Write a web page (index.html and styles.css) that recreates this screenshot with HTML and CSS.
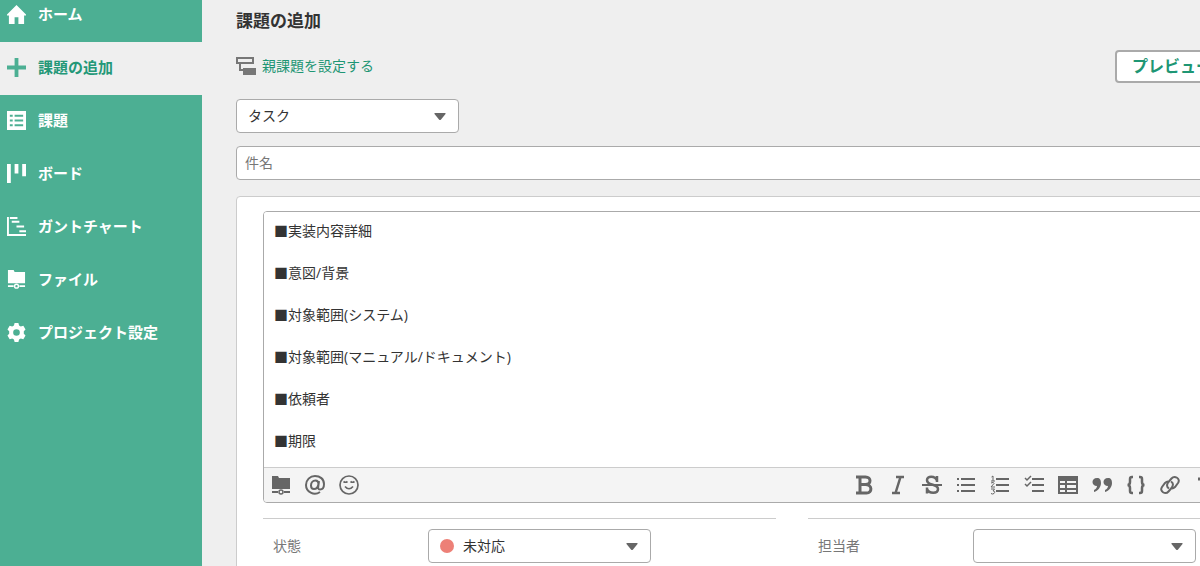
FILE: index.html
```html
<!DOCTYPE html>
<html lang="ja">
<head>
<meta charset="utf-8">
<meta name="viewport" content="width=device-width, initial-scale=1">
<title>課題の追加</title>
<link rel="stylesheet" href="styles.css">
</head>
<body>
<div class="app">
  <nav class="sidebar" aria-label="プロジェクト">
    <ul class="nav">
      <li><a class="nav-link" href="#"><svg class="icon" viewBox="0 0 20 20"><path d="M10 0 0 10v1h2v9h6v-7h4v7h6v-9h2v-1z"/></svg>ホーム</a></li>
      <li><a class="nav-link active" href="#" aria-current="page"><svg class="icon" viewBox="0 0 20 20"><path d="M8 0h4v8h8v4h-8v8H8v-8H0V8h8z"/></svg>課題の追加</a></li>
      <li><a class="nav-link" href="#"><svg class="icon" viewBox="0 0 20 20"><path fill-rule="evenodd" d="M0 0h20v20H0zM3 4v2h3V4zm5 0v2h9V4zM3 9v2h3V9zm5 0v2h9V9zm-5 5v2h3v-2zm5 0v2h9v-2z"/></svg>課題</a></li>
      <li><a class="nav-link" href="#"><svg class="icon" viewBox="0 0 20 20"><path d="M0 0h4v20H0zM8 0h4v10H8zM16 0h4v13h-4z"/></svg>ボード</a></li>
      <li><a class="nav-link" href="#"><svg class="icon" viewBox="0 0 20 20"><path d="M0 0h2v18h18v2H0zM3 0h8v2H3zM5 4h8v2H5zM10 9h8v2h-8zM13 14h7v2h-7z"/></svg>ガントチャート</a></li>
      <li><a class="nav-link" href="#"><svg class="icon" viewBox="0 0 20 20"><path d="M1 0h6l1 2h11v12H1zM1 16h6v2H1zM13 16h6v2h-6z"/><circle class="ring" cx="10" cy="17" r="2"/></svg>ファイル</a></li>
      <li><a class="nav-link" href="#"><svg class="icon" viewBox="0 0 20 20"><path fill-rule="evenodd" d="M8 0h4l.7 2.700 1.800 1L17.200 3l2.300 3.800L17.700 8.800v2.400l1.800 2L17.200 17l-2.700-.7-1.800 1L12 20H8l-.7-2.700-1.800-1L2.800 17 .5 13.200l1.800-2V8.800L.5 6.800 2.800 3l2.700.7 1.800-1zM10 6.500a3.500 3.500 0 1 0 0 7 3.500 3.500 0 0 0 0-7z"/></svg>プロジェクト設定</a></li>
    </ul>
  </nav>
  <main class="main">
    <form class="form">
      <h1 class="title">課題の追加</h1>
      <div class="actions">
        <a class="parent-link" href="#"><svg class="icon" viewBox="0 0 20 20"><path fill-rule="evenodd" d="M0 1h18v7H5v5h2v-1h13v7H7v-4H3V8H0zM2 3v3h14V3z"/></svg>親課題を設定する</a>
        <button class="preview" type="button">プレビュー</button>
      </div>
      <div class="picker">
        <select class="select" aria-label="種別"><option>タスク</option></select>
        <svg class="arrow" viewBox="0 0 12 8"><path d="M1 0h10q1 0 .5 1L7 6.500q-1 1-2 0L.5 1Q0 0 1 0z"/></svg>
      </div>
      <input class="subject" type="text" placeholder="件名" aria-label="件名">
      <section class="card">
        <div class="editor">
          <textarea class="body-text" rows="11" aria-label="詳細">■実装内容詳細

■意図/背景

■対象範囲(システム)

■対象範囲(マニュアル/ドキュメント)

■依頼者

■期限</textarea>
          <div class="toolbar">
            <button class="tool" type="button" aria-label="ファイル"><svg class="icon" viewBox="0 0 20 20"><path d="M1 1h6l1 2h11v11H1zM1 16h6v2H1zM13 16h6v2h-6z"/><circle class="ring" cx="10" cy="17" r="2"/></svg></button>
            <button class="tool" type="button" aria-label="メンション"><svg class="icon line" viewBox="0 0 20 20"><path d="M15 17c-6 4-14 0-14-7 0-5 4-9 9-9s9 3 9 8c0 4-2 5.500-4 5.500S13 13 13.300 11L14 6M13.500 9c0-2-1-3.500-3-3.500-3 0-4.500 2.500-4.500 5s1 3.500 3 3.500 4-2 4.500-5"/></svg></button>
            <button class="tool" type="button" aria-label="絵文字"><svg class="icon face" viewBox="0 0 20 20"><circle cx="10" cy="10" r="9"/><path d="M4.500 6.500q2 1.500 4 0M11.500 6.500q2 1.500 4 0M6 11.500q4 4.500 8 0"/></svg></button>
            <span class="spacer"></span>
            <button class="tool" type="button" aria-label="太字"><svg class="icon strong" viewBox="0 0 20 20"><path d="M2 2h9.500c6 0 6 7.500 0 7.500H6M6 2v16M2 18h10.500c6 0 6-8.500-1-8.500"/></svg></button>
            <button class="tool" type="button" aria-label="斜体"><svg class="icon italic" viewBox="0 0 20 20"><path d="M8 2h8M4 18h8M12.500 2 7.500 18"/></svg></button>
            <button class="tool" type="button" aria-label="取り消し線"><svg class="icon strike" viewBox="0 0 20 20"><path d="M15 7V1M15 5.500c-2-5-10-5-10-.5 0 3 3 4 5 4.500s6 1.500 6 4.500c0 5-9 5-11 0M5 12.500v6"/><path class="bar" d="M0 10h20"/></svg></button>
            <button class="tool" type="button" aria-label="箇条書き"><svg class="icon" viewBox="0 0 20 20"><path d="M5 3h14v2H5zM5 9h14v2H5zM5 15h14v2H5zM1 3h2v2H1zM1 9h2v2H1zM1 15h2v2H1z"/></svg></button>
            <button class="tool" type="button" aria-label="番号付きリスト"><svg class="icon" viewBox="0 0 20 20"><path d="M6 3h13v2H6zM6 9h13v2H6zM6 15h13v2H6z"/><path class="thin" d="M1.500 2 3 1v5M1 6h4M1 8q3-1.500 3 .5L1 12h4M1 14h3.500L3 16q3 0 1 2.500-1.500 1-3 0"/></svg></button>
            <button class="tool" type="button" aria-label="チェックリスト"><svg class="icon" viewBox="0 0 20 20"><path d="M8 3h12v2H8zM8 9h12v2H8zM8 15h12v2H8z"/><path class="check" d="m1 3 2 2 4-4M1 9l2 2 4-4"/></svg></button>
            <button class="tool" type="button" aria-label="表"><svg class="icon" viewBox="0 0 20 20"><path fill-rule="evenodd" d="M0 1h20v18H0zM2 6v2h5V6zm7 0v2h9V6zm-7 4v3h5v-3zm7 0v3h9v-3zm-7 5v2h5v-2zm7 0v2h9v-2z"/></svg></button>
            <button class="tool" type="button" aria-label="引用"><svg class="icon" viewBox="0 0 20 20"><path d="M5 3c3 0 4 2 4 5 0 4-3 8-7 9v-2c2-1 3-2.500 3-4-3 0-4.500-2-4.500-4S2 3 5 3zM16 3c3 0 4 2 4 5 0 4-3 8-7 9v-2c2-1 3-2.500 3-4-3 0-4.500-2-4.500-4S13 3 16 3z"/></svg></button>
            <button class="tool" type="button" aria-label="コード"><svg class="icon braces" viewBox="0 0 20 20"><path d="M7 2H6Q4 2 4 4v3q0 3-2.500 3Q4 10 4 13v3q0 2 2 2h1M13 2h1q2 0 2 2v3q0 3 2.500 3-2.500 0-2.500 3v3q0 2-2 2h-1"/></svg></button>
            <button class="tool" type="button" aria-label="リンク"><svg class="icon line" viewBox="0 0 20 20"><path d="M9 13.500C6.500 12 6.500 9.500 8.500 7l3-3.500C14.500 0 21 3.500 18 8l-3 4q-1.500 1.500-3 1.500M11 6.500c2.500 1.500 2.500 4 .5 6.500l-3 3.500C5.500 20-1 16.500 2 12l3-4q1.500-1.500 3-1.500"/></svg></button>
            <button class="tool" type="button" aria-label="見出し"><svg class="icon strong" viewBox="0 0 20 20"><path d="M4 4h12M10 4v13"/></svg></button>
          </div>
        </div>
        <div class="fields">
          <div class="field">
            <label class="label" for="status">状態</label>
            <div class="picker">
              <select class="select with-dot" id="status"><option>未対応</option></select>
              <span class="dot"></span>
              <svg class="arrow" viewBox="0 0 12 8"><path d="M1 0h10q1 0 .5 1L7 6.500q-1 1-2 0L.5 1Q0 0 1 0z"/></svg>
            </div>
          </div>
          <div class="field">
            <label class="label" for="assignee">担当者</label>
            <div class="picker">
              <select class="select" id="assignee"><option></option></select>
              <svg class="arrow" viewBox="0 0 12 8"><path d="M1 0h10q1 0 .5 1L7 6.500q-1 1-2 0L.5 1Q0 0 1 0z"/></svg>
            </div>
          </div>
        </div>
      </section>
    </form>
  </main>
</div>
</body>
</html>
```
FILE: styles.css
```css
* {
  box-sizing: border-box;
}

body {
  margin: 0;
  height: 100vh;
  overflow: hidden;
  background: #efefef;
  color: #333;
  font: 14px/21px "Open Sans", "Noto Sans CJK JP", sans-serif;
}

button,
input,
select,
textarea {
  margin: 0;
  color: inherit;
  font: inherit;
}

a {
  text-decoration: none;
}

.app {
  display: flex;
  min-height: 100vh;
}

.icon {
  flex: none;
  width: 20px;
  height: 20px;
  fill: currentColor;
}

.sidebar {
  flex: none;
  width: 202px;
  background: #4caf93;
}

.nav {
  margin: -11px 0 0;
  padding: 0;
  list-style: none;
}

.nav-link {
  display: flex;
  align-items: center;
  gap: 12px;
  height: 53px;
  padding: 0 7px 2px;
  color: #fff;
  font-size: 15px;
  font-weight: 700;
}

.nav-link .icon {
  width: 19px;
  height: 19px;
}

.nav-link.active {
  background: #efefef;
  color: #249878;
}

.nav-link.active .icon {
  color: #4caf93;
}

.main {
  flex: 1;
  min-width: 0;
  padding: 8px 0 0 34px;
}

/* The form is wider than the viewport and runs off its right edge. */
.form {
  display: flex;
  flex-direction: column;
  margin-right: -148px;
}

.title {
  margin: 0;
  font-size: 17px;
  line-height: 26px;
}

.actions {
  display: flex;
  align-items: center;
  justify-content: space-between;
  height: 33px;
  margin: 16px 0;
}

.parent-link {
  display: flex;
  align-items: center;
  gap: 6px;
  padding-bottom: 2px;
  color: #1e9674;
}

.parent-link .icon {
  color: #777;
}

.preview {
  width: 114px;
  height: 33px;
  margin-right: 119px;
  padding: 0;
  border: 2px solid #aaa;
  border-radius: 4px;
  background: #fff;
  color: #1e9674;
  font-size: 16px;
  font-weight: 700;
}

.picker {
  position: relative;
  width: 223px;
}

.select {
  display: block;
  width: 100%;
  height: 34px;
  padding: 0 32px 2px 11px;
  appearance: none;
  border: 1px solid #aaa;
  border-radius: 4px;
  background: #fff;
}

.select.with-dot {
  padding-left: 34px;
}

.arrow {
  position: absolute;
  top: 14px;
  right: 13px;
  width: 12px;
  height: 8px;
  fill: #666;
  pointer-events: none;
}

.dot {
  position: absolute;
  top: 10px;
  left: 12px;
  width: 14px;
  height: 14px;
  border-radius: 50%;
  background: #ed8077;
  pointer-events: none;
}

.subject {
  height: 34px;
  margin: 13px 0 16px;
  padding: 0 8px 2px;
  border: 1px solid #aaa;
  border-radius: 4px;
  background: #fff;
}

.subject::placeholder {
  color: #777;
}

.card {
  padding: 14px 26px 32px;
  border: 1px solid #ccc;
  border-radius: 4px;
  background: #fff;
}

.editor {
  overflow: hidden;
  border: 1px solid #aaa;
  border-radius: 4px;
}

.body-text {
  display: block;
  width: 100%;
  padding: 8px 10px 16px;
  border: 0;
  outline: 0;
  resize: none;
  background: #fff;
}

.toolbar {
  display: flex;
  align-items: center;
  gap: 14px;
  height: 35px;
  padding: 0 106px 0 7px;
  border-top: 1px solid #ccc;
  background: #f4f4f4;
}

.tool {
  display: flex;
  padding: 0;
  border: 0;
  background: none;
  color: #666;
}

.spacer {
  flex: 1;
}

.line,
.face,
.braces,
.italic,
.strike,
.strong {
  fill: none;
  stroke: currentColor;
  stroke-width: 2;
}

.face {
  stroke-width: 1.7;
}

.braces,
.italic,
.strike {
  stroke-width: 2.5;
}

.strong {
  stroke-width: 3;
}

.bar {
  stroke-width: 2;
}

.ring,
.thin,
.check {
  fill: none;
  stroke: currentColor;
}

.ring,
.check {
  stroke-width: 1.5;
}

.fields {
  display: grid;
  grid-template-columns: 1fr 1fr;
  gap: 32px;
  margin-top: 15px;
}

.field {
  display: flex;
  align-items: center;
  padding: 10px 0;
  border-top: 1px solid #ccc;
}

.label {
  width: 165px;
  padding: 0 0 2px 10px;
  color: #777;
}
```
